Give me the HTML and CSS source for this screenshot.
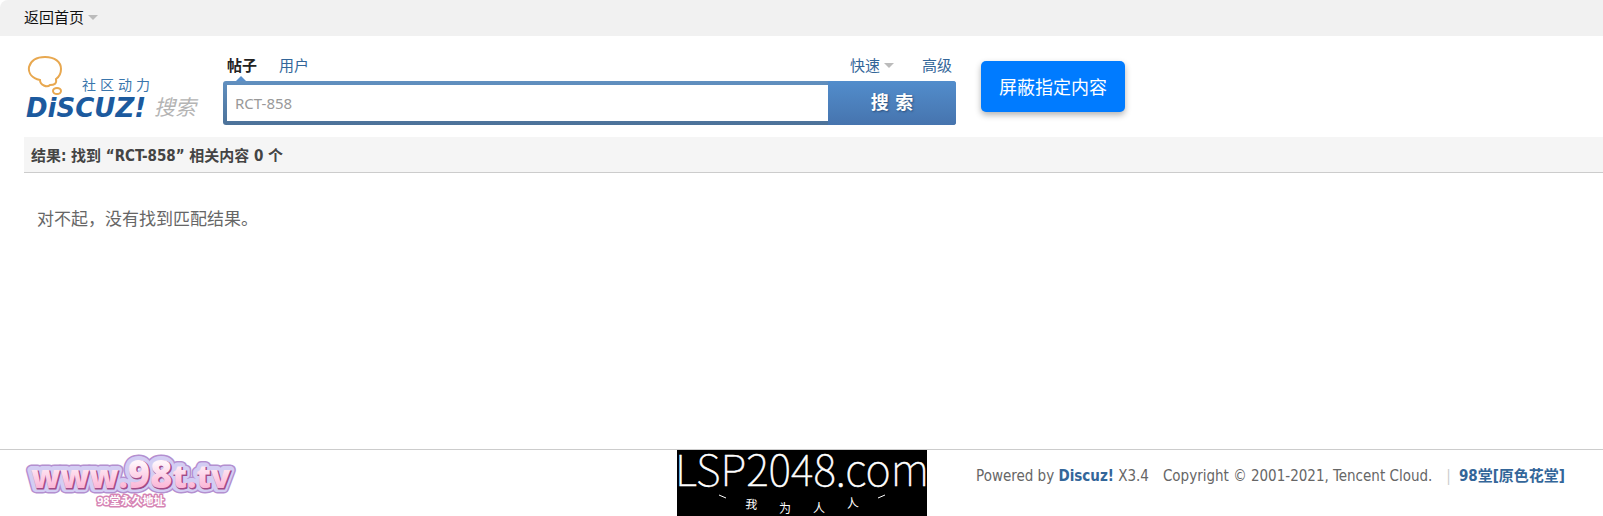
FILE: index.html
```
<!DOCTYPE html>
<html lang="zh-CN">
<head>
    <meta charset="utf-8">
    <meta name="viewport" content="width=device-width">
    <title>搜索</title>
    <link rel="stylesheet" href="styles.css">
</head>
<body>

<nav class="topbar">
    <a class="home has-arrow" href="#">返回首页</a>
</nav>

<header class="header">
    <a class="logo" href="#">
        <svg width="176" height="68" viewBox="0 0 176 68">
            <path class="bubble" d="M16 26C8 24 4 19 5 13C7 6 13 3 21 3C31 3 37 8 37 15C37 20 35 23 32 25C33 30 30 31 26 31C23 34 16 31 16 26Z"/>
            <ellipse class="bubble" cx="33" cy="37" rx="4" ry="3"/>
            <text class="logo-tag" x="58" y="36">社区动力</text>
            <text class="logo-name" x="2" y="63">DiSCUZ!</text>
            <text class="logo-search" x="130" y="61">搜索</text>
        </svg>
    </a>

    <form class="search">
        <div class="tabs">
            <a class="tab active" href="#">帖子</a>
            <a class="tab" href="#">用户</a>
            <a class="tab quick has-arrow" href="#">快速</a>
            <a class="tab" href="#">高级</a>
        </div>
        <div class="search-box">
            <input class="search-input" type="text" value="RCT-858" aria-label="搜索">
            <button class="search-button" type="button">搜 索</button>
        </div>
    </form>

    <button class="block-button" type="button">屏蔽指定内容</button>
</header>

<main class="main">
    <h2 class="result-title">结果: 找到 “RCT-858” 相关内容 0 个</h2>
    <p class="empty">对不起，没有找到匹配结果。</p>
</main>

<footer class="footer">
    <a class="site-logo" href="#">
        <svg width="216" height="60" viewBox="0 0 216 60">
            <defs>
                <linearGradient id="pink" x1="0" y1="0" x2="0" y2="1">
                    <stop offset="0.3" stop-color="#fff4fa"/>
                    <stop offset="0.8" stop-color="#fbb4d6"/>
                </linearGradient>
                <text id="domain" class="domain" x="7" y="38">www.<tspan class="domain-big">98</tspan>t.tv</text>
            </defs>
            <use class="domain-edge" href="#domain"/>
            <use class="domain-glow" href="#domain"/>
            <use class="domain-shadow" href="#domain" x="1" y="1"/>
            <use class="domain-face" href="#domain"/>
            <text class="domain-note" x="73" y="55">98堂永久地址</text>
        </svg>
    </a>

    <a class="banner" href="#">
        <svg width="250" height="66" viewBox="0 0 250 66">
            <rect width="250" height="66"/>
            <text class="banner-name" x="125" y="36">LSP2048.com</text>
            <path class="banner-dash" d="M42 45l7 3M201 48l7-3"/>
            <text class="banner-text" x="68" y="58" rotate="6">我</text>
            <text class="banner-text" x="102" y="63">为</text>
            <text class="banner-text" x="136" y="63">人</text>
            <text class="banner-text" x="170" y="58" rotate="-8">人</text>
        </svg>
    </a>

    <p class="copyright">
        <span>Powered by <a class="strong-link" href="#">Discuz!</a> X3.4</span>
        <span>Copyright © 2001-2021, Tencent Cloud.</span>
        <span><span class="pipe">|</span><a class="strong-link" href="#">98堂[原色花堂]</a></span>
    </p>
</footer>

</body>
</html>
```
FILE: styles.css
```
* {
    box-sizing: border-box;
}

body {
    margin: 0;
    min-height: 100vh;
    display: flex;
    flex-direction: column;
    background: #fff;
    color: #666;
    font: 15px/20px "Noto Sans", "Noto Sans CJK SC", sans-serif;
}

a {
    color: #369;
    text-decoration: none;
}

h2, p {
    margin: 0;
}

svg {
    display: block;
}

.topbar {
    height: 36px;
    padding: 7px 24px;
    background: #f1f1f1;
    border-top-left-radius: 8px;
}

.home {
    color: #111;
}

.has-arrow::after {
    content: "";
    display: inline-block;
    margin-left: 4px;
    vertical-align: 3px;
    border: 5px solid transparent;
    border-top-color: #bbb;
    border-bottom: 0;
}

.header {
    display: flex;
    align-items: flex-start;
    padding: 18px 24px 12px;
}

.logo {
    width: 199px;
}

.bubble {
    fill: none;
    stroke: #e8a850;
    stroke-width: 2;
}

.logo-tag {
    fill: #3a76ac;
    font-size: 14px;
    letter-spacing: 4px;
}

.logo-name {
    fill: #1c5a9e;
    font: italic 700 26px "DejaVu Sans", sans-serif;
}

.logo-search {
    fill: #b4b4b4;
    font-size: 21px;
    font-style: italic;
}

.search {
    flex: 0 1 733px;
}

.tabs {
    display: flex;
    gap: 22px;
    padding: 1px 4px 6px;
}

.tab.active {
    position: relative;
    color: #222;
    font-weight: bold;
}

.tab.active::after {
    content: "";
    position: absolute;
    left: 9px;
    bottom: -6px;
    border: 5px solid transparent;
    border-bottom-color: #5a8fcb;
    border-top: 0;
}

.quick {
    margin: 0 6px 0 auto;
}

.search-box {
    display: flex;
    height: 44px;
    padding: 4px 0 4px 4px;
    background: linear-gradient(#6190c0, #4c7299);
    border-radius: 3px;
}

.search-input {
    flex: 1;
    min-width: 0;
    padding: 0 8px;
    border: 0;
    background: #fff;
    color: #999;
    font: inherit;
    outline: none;
}

.search-button {
    width: 128px;
    margin: -4px 0;
    border: 0;
    border-radius: 0 3px 3px 0;
    background: linear-gradient(#528dcc, #4674ae);
    color: #fff;
    font: bold 18px/20px "DejaVu Sans", "Noto Sans CJK SC", sans-serif;
    text-shadow: 1px 1px 2px #2b4f7c;
}

.block-button {
    height: 51px;
    margin: 7px 0 0 25px;
    padding: 0 18px;
    border: 0;
    border-radius: 5px;
    background: #007bff;
    box-shadow: 0 3px 6px rgba(0, 0, 0, 0.3);
    color: #fff;
    font: 18px/20px "Noto Sans", "Noto Sans CJK SC", sans-serif;
}

.main {
    flex: 1;
    padding-left: 24px;
}

.result-title {
    padding: 9px 7px 6px;
    background: #f5f5f5;
    border-bottom: 1px solid #ccc;
    color: #444;
    font: bold 15px/20px "DejaVu Sans Condensed", "Noto Sans CJK SC", sans-serif;
}

.empty {
    padding: 36px 13px;
    font-size: 17px;
}

.footer {
    display: grid;
    grid-template-columns: 1fr auto 1fr;
    height: 67px;
    padding: 0 24px;
    border-top: 1px solid #ccc;
}

.domain {
    font: 800 32px "Open Sans", sans-serif;
}

.domain-big {
    font-size: 38px;
}

.domain-edge {
    fill: #b48fd0;
    stroke: #b48fd0;
    stroke-width: 11;
    stroke-linejoin: round;
}

.domain-glow {
    fill: #d3cdf3;
    stroke: #d3cdf3;
    stroke-width: 8;
    stroke-linejoin: round;
}

.domain-shadow {
    fill: #a04a86;
    stroke: #a04a86;
    stroke-width: 1;
}

.domain-face {
    fill: url(#pink);
}

.domain-note {
    fill: #fff;
    stroke: #d684b4;
    stroke-width: 3;
    stroke-linejoin: round;
    paint-order: stroke;
    font-size: 11px;
    font-weight: bold;
}

.banner-name {
    fill: #fff;
    stroke: #fff;
    stroke-width: 0.5;
    font: 100 43px "Noto Sans CJK SC", sans-serif;
    text-anchor: middle;
}

.banner-text {
    fill: #fff;
    font-size: 12px;
}

.banner-dash {
    stroke: #fff;
}

.copyright {
    display: flex;
    justify-content: flex-end;
    gap: 14px;
    padding: 16px 14px 0 0;
    font: 15px/20px "DejaVu Sans Condensed", "Noto Sans CJK SC", sans-serif;
    white-space: nowrap;
}

.strong-link {
    font-weight: bold;
}

.pipe {
    margin-right: 8px;
    color: #ccc;
}
```
